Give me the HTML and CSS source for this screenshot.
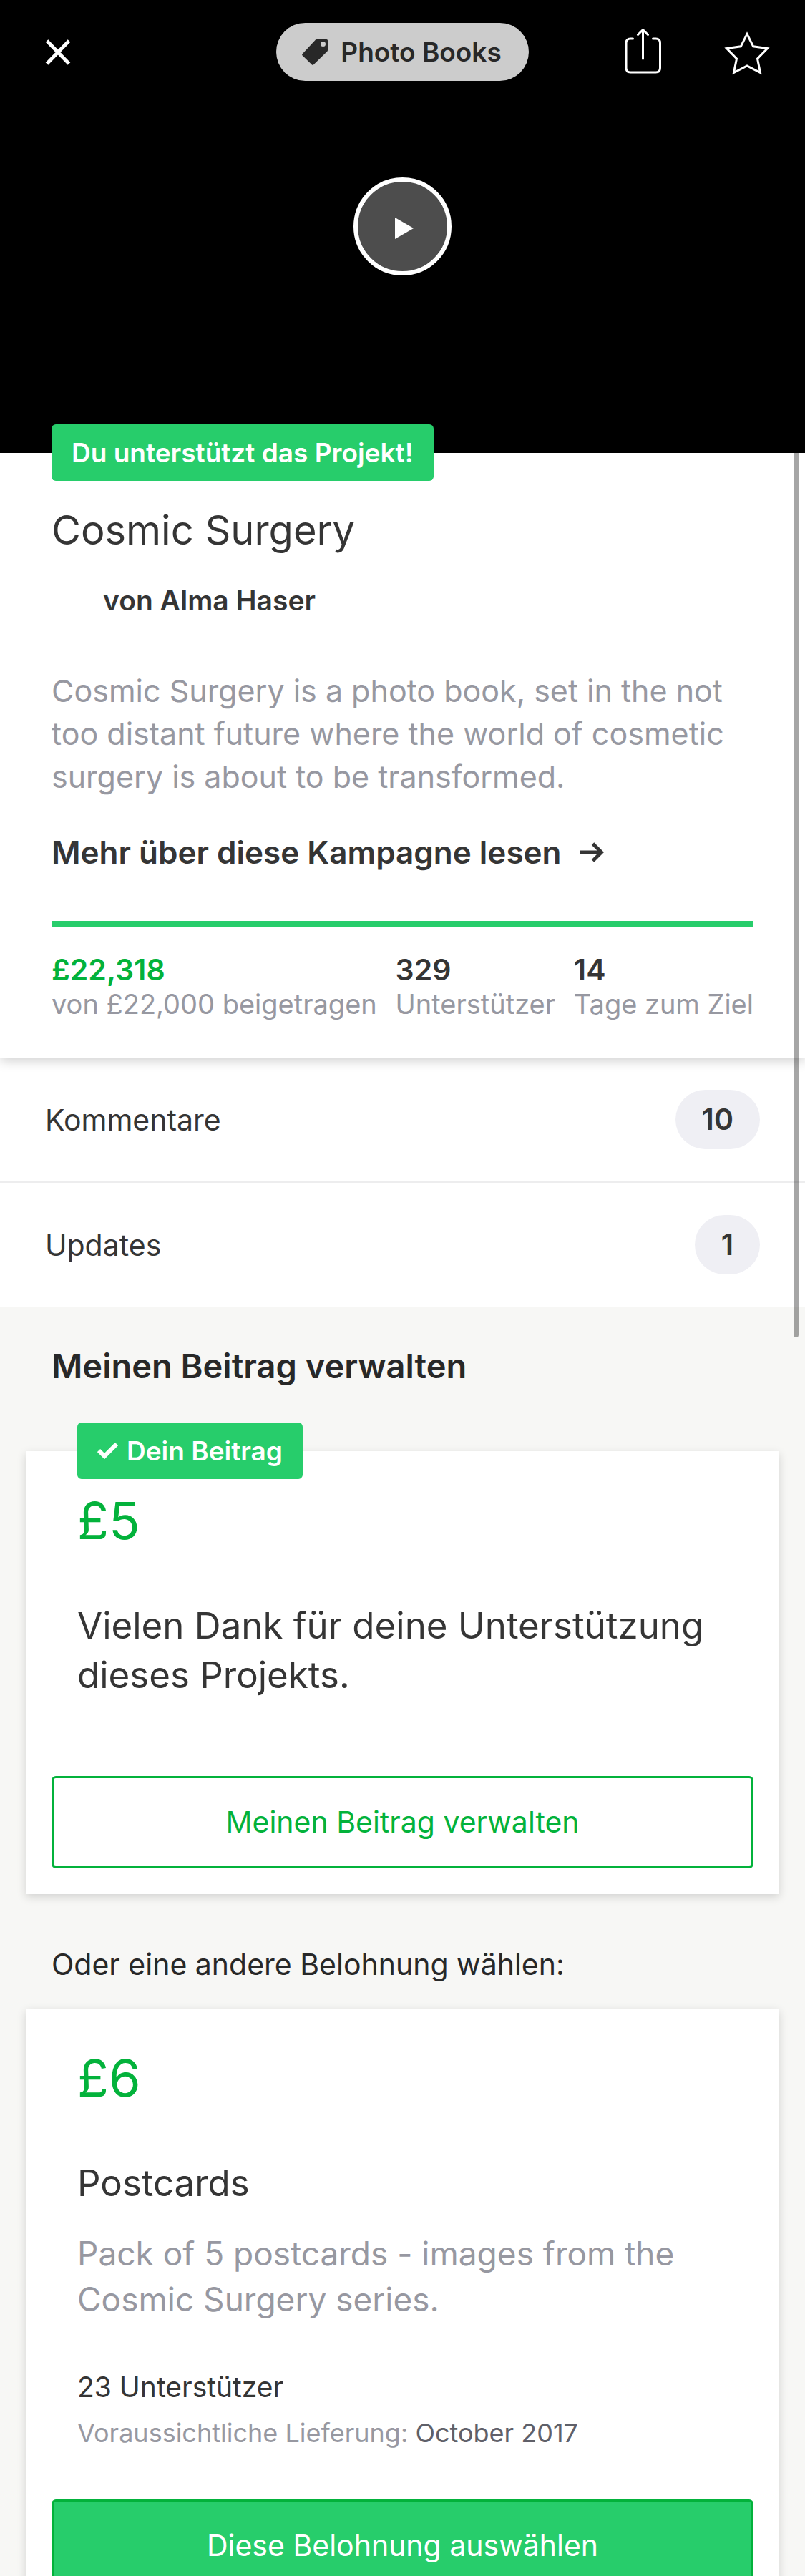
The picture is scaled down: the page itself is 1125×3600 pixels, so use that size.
FILE: index.html
```html
<!DOCTYPE html>
<html lang="de">
<head>
<meta charset="utf-8">
<meta name="viewport" content="width=device-width, initial-scale=1">
<title>Cosmic Surgery</title>
<link rel="stylesheet" href="styles.css">
</head>
<body>
<header class="hero">
  <nav class="toolbar" aria-label="Projekt">
    <div class="toolbar-side">
      <button class="icon-button close" type="button" aria-label="Schließen">
        <svg width="36" height="36" viewBox="0 0 36 36" fill="none" stroke="#fff" stroke-width="5"><path d="M2.500 2 33.500 34M33.500 2 2.500 34"/></svg>
      </button>
    </div>
    <a class="category" href="#">
      <svg width="36" height="36" viewBox="0 0 36 36"><path fill="#282828" fill-rule="evenodd" d="M19 .6Q19.600 0 20.500 0H34.500Q36 0 36 1.500V15Q36 16 35.300 16.700L16 35.500Q15 36.400 14 35.500L.6 22.500Q-.4 21.500.6 20.300ZM29.500 3a3.500 3.500 0 1 0 0 7a3.500 3.500 0 1 0 0-7Z"/></svg>
      Photo Books
    </a>
    <div class="toolbar-side toolbar-actions">
      <button class="icon-button" type="button" aria-label="Teilen">
        <svg width="52" height="66" viewBox="0 0 52 66" fill="none" stroke="#fff" stroke-width="3" stroke-linecap="round" stroke-linejoin="round"><path d="M11.500 14H8Q2 14 2 20V55Q2 61 8 61H43.500Q49.500 61 49.500 55V20Q49.500 14 43.500 14H39.500M25.500 42V2M18.500 8.500 25.500 1.500 32.500 8.500"/></svg>
      </button>
      <button class="icon-button" type="button" aria-label="Merken">
        <svg width="66" height="66" viewBox="0 0 66 66" fill="none" stroke="#fff" stroke-width="3"><path d="M33 7.500 41.700 24.800 61.500 27.500 47.500 42 51.500 61.500 33 52 14.500 61.500 18.500 42 4.500 27.500 24.300 24.800Z"/></svg>
      </button>
    </div>
  </nav>
  <button class="play" type="button" aria-label="Video abspielen">
    <svg width="26" height="30" viewBox="0 0 26 30"><path fill="#fff" d="M0 0 26 15 0 30Z"/></svg>
  </button>
</header>

<main>
  <section class="project">
    <p class="tag">Du unterstützt das Projekt!</p>
    <h1 class="project-title">Cosmic Surgery</h1>
    <p class="creator">von Alma Haser</p>
    <p class="blurb">Cosmic Surgery is a photo book, set in the not too distant future where the world of cosmetic surgery is about to be transformed.</p>
    <a class="read-more" href="#">Mehr über diese Kampagne lesen
      <svg width="33" height="28" viewBox="0 0 33 28" fill="none" stroke="#353535" stroke-width="5"><path d="M0 14H29M17.500 2 29.500 14 17.500 26"/></svg>
    </a>
    <div class="progress" role="progressbar" aria-label="Finanzierung" aria-valuenow="100"></div>
    <dl class="stats">
      <div class="stat stat-pledged"><dt>von £22,000 beigetragen</dt><dd>£22,318</dd></div>
      <div class="stat"><dt>Unterstützer</dt><dd>329</dd></div>
      <div class="stat"><dt>Tage zum Ziel</dt><dd>14</dd></div>
    </dl>
  </section>

  <nav class="links" aria-label="Mehr zum Projekt">
    <a class="link-row" href="#">Kommentare <span class="count">10</span></a>
    <a class="link-row" href="#">Updates <span class="count">1</span></a>
  </nav>

  <section class="rewards">
    <h2 class="rewards-title">Meinen Beitrag verwalten</h2>
    <article class="card card-own">
      <p class="tag">
        <svg width="29" height="23" viewBox="0 0 29 23" fill="none" stroke="#fff" stroke-width="6"><path d="M2 11 10 19 27 2"/></svg>
        Dein Beitrag
      </p>
      <div class="card-text">
        <p class="amount">£5</p>
        <h3 class="reward-name">Vielen Dank für deine Unterstützung dieses Projekts.</h3>
      </div>
      <button class="action action-outline" type="button">Meinen Beitrag verwalten</button>
    </article>
    <p class="other">Oder eine andere Belohnung wählen:</p>
    <article class="card">
      <div class="card-text">
        <p class="amount">£6</p>
        <h3 class="reward-name">Postcards</h3>
        <p class="reward-text">Pack of 5 postcards - images from the Cosmic Surgery series.</p>
        <p class="backers">23 Unterstützer</p>
        <p class="delivery">Voraussichtliche Lieferung: <time datetime="2017-10">October 2017</time></p>
      </div>
      <button class="action action-fill" type="button">Diese Belohnung auswählen</button>
    </article>
  </section>
</main>
<div class="scroll-indicator" aria-hidden="true"></div>
</body>
</html>
```
FILE: styles.css
```css
*, *::before, *::after { box-sizing: border-box; }

body {
  position: relative;
  margin: 0;
  background: #f7f7f5;
  font-family: Inter, "Liberation Sans", sans-serif;
  font-size: 39px;
  line-height: 48px;
  color: #353535;
}

h1, h2, h3, p, dl, dd { margin: 0; font-weight: 400; }
a { color: inherit; text-decoration: none; }
svg { display: block; flex: none; }

button {
  padding: 0;
  border: 0;
  background: none;
  font: inherit;
  cursor: pointer;
}

/* Video header */
.hero {
  display: flex;
  flex-direction: column;
  align-items: center;
  height: 633px;
  padding: 32px 48px 0;
  background: #000;
}

.toolbar {
  display: flex;
  align-items: center;
  align-self: stretch;
}

.toolbar-side { flex: 1; display: flex; }
.toolbar-actions { justify-content: flex-end; gap: 86px; }
.close { margin-left: 15px; }

.category {
  display: flex;
  align-items: center;
  gap: 18px;
  height: 81px;
  padding: 0 38px 0 36px;
  border-radius: 41px;
  background: #ccc;
  color: #282828;
  font-size: 37px;
  font-weight: 600;
}

.play {
  display: flex;
  align-items: center;
  justify-content: center;
  width: 137px;
  height: 137px;
  margin-top: 135px;
  padding: 4px 0 0 4px;
  border: 6px solid #fff;
  border-radius: 50%;
  background: #4d4d4d;
}

/* Green label that straddles the top edge of its section */
.tag {
  display: flex;
  align-items: center;
  gap: 12px;
  width: fit-content;
  height: 79px;
  margin-top: -40px;
  padding: 0 28px;
  border-radius: 6px;
  background: #27cd6b;
  color: #fff;
  font-size: 37px;
  font-weight: 600;
}

/* Project summary */
.project {
  position: relative;
  display: flow-root;
  padding: 0 72px 52px;
  background: #fff;
  box-shadow: 0 3px 16px rgba(0, 0, 0, 0.2);
  clip-path: inset(-40px 0 -19px);
}

.project-title {
  margin-top: 33px;
  font-size: 56px;
  line-height: 72px;
}

.creator {
  margin: 38px 0 0 72px;
  font-weight: 600;
}

.blurb {
  margin-top: 72px;
  font-size: 43px;
  line-height: 60px;
  color: #9798a1;
}

.read-more {
  display: flex;
  align-items: center;
  gap: 26px;
  margin-top: 46px;
  font-size: 44px;
  line-height: 60px;
  font-weight: 600;
}

.progress { height: 9px; margin-top: 66px; background: #27cd6b; }

.stats {
  display: flex;
  justify-content: space-between;
  margin-top: 35px;
  font-size: 38px;
}

.stat { display: flex; flex-direction: column-reverse; color: #9798a1; }
.stat dd { color: #353535; font-size: 41px; font-weight: 600; }
.stat-pledged dd { color: #03b23b; }

/* Comments and updates */
.links { background: #fff; }

.link-row {
  display: flex;
  align-items: center;
  justify-content: space-between;
  height: 171px;
  padding: 0 63px;
  font-size: 41px;
}

.link-row + .link-row { height: 176px; border-top: 3px solid #ededee; }

.count {
  padding: 17px 37px 18px;
  border-radius: 42px;
  background: #efeff4;
  font-weight: 600;
}

/* Rewards */
.rewards { padding: 47px 36px 0; }

.rewards-title {
  margin: 0 36px;
  font-size: 47px;
  line-height: 72px;
  font-weight: 600;
  color: #282828;
}

.card {
  display: flow-root;
  padding: 0 36px 36px;
  background: #fff;
  box-shadow: 0 4px 12px rgba(0, 0, 0, 0.15);
}

.card-text { padding: 52px 36px 69px; }

.card-own { margin-top: 83px; }
.card-own .tag { margin-left: 36px; }
.card-own .card-text { padding-top: 13px; padding-bottom: 107px; }

.amount {
  font-size: 72px;
  line-height: 90px;
  color: #03b23b;
}

.reward-name {
  margin-top: 67px;
  font-size: 51px;
  line-height: 69px;
}

.reward-text {
  margin-top: 32px;
  font-size: 46px;
  line-height: 64px;
  color: #9798a1;
}

.backers { margin-top: 67px; }
.delivery { margin-top: 16px; font-size: 36px; color: #9798a1; }
.delivery time { color: #5f6069; }

.action {
  display: block;
  width: 100%;
  height: 129px;
  padding-bottom: 2px;
  border: 3px solid #03b23b;
  border-radius: 6px;
  font-size: 41px;
}

.action-outline { color: #03b23b; }
.action-fill { background: #27cd6b; color: #fff; }

.other {
  margin: 71px 36px 35px;
  font-size: 41px;
  line-height: 54px;
  color: #282828;
}

/* Overlay scroll indicator */
.scroll-indicator {
  position: absolute;
  top: 633px;
  right: 9px;
  width: 7px;
  height: 1236px;
  border-radius: 0 0 4px 4px;
  background: rgba(0, 0, 0, 0.35);
}
```
